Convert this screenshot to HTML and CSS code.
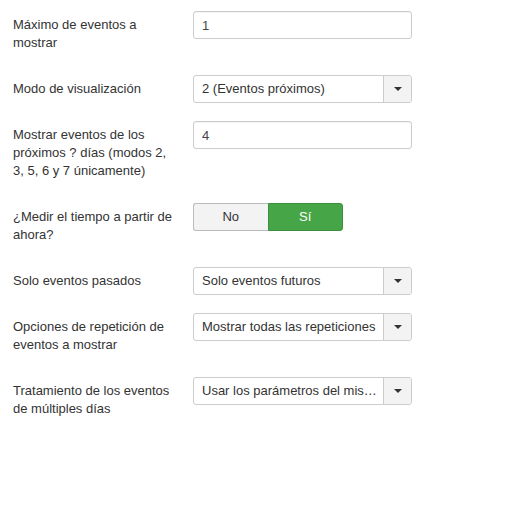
FILE: index.html
```html
<!DOCTYPE html>
<html lang="es">
<head>
    <meta charset="UTF-8">
    <meta name="viewport" content="width=device-width, initial-scale=1.0">
    <title>Opciones del módulo</title>
    <link rel="stylesheet" href="styles.css">
</head>
<body>
    <form class="options">
        <div class="control-group">
            <label class="control-label">Máximo de eventos a mostrar</label>
            <div class="controls">
                <input class="text-input" type="text" value="1">
            </div>
        </div>

        <div class="control-group">
            <label class="control-label">Modo de visualización</label>
            <div class="controls">
                <div class="chosen">
                    <span class="chosen-text">2 (Eventos próximos)</span>
                    <span class="chosen-btn"><b class="caret"></b></span>
                </div>
            </div>
        </div>

        <div class="control-group">
            <label class="control-label">Mostrar eventos de los próximos ? días (modos 2, 3, 5, 6 y 7 únicamente)</label>
            <div class="controls">
                <input class="text-input" type="text" value="4">
            </div>
        </div>

        <div class="control-group">
            <label class="control-label">¿Medir el tiempo a partir de ahora?</label>
            <div class="controls">
                <div class="btn-group">
                    <span class="btn">No</span>
                    <span class="btn btn-success">Sí</span>
                </div>
            </div>
        </div>

        <div class="control-group">
            <label class="control-label">Solo eventos pasados</label>
            <div class="controls">
                <div class="chosen">
                    <span class="chosen-text">Solo eventos futuros</span>
                    <span class="chosen-btn"><b class="caret"></b></span>
                </div>
            </div>
        </div>

        <div class="control-group">
            <label class="control-label">Opciones de repetición de eventos a mostrar</label>
            <div class="controls">
                <div class="chosen">
                    <span class="chosen-text">Mostrar todas las repeticiones</span>
                    <span class="chosen-btn"><b class="caret"></b></span>
                </div>
            </div>
        </div>

        <div class="control-group">
            <label class="control-label">Tratamiento de los eventos de múltiples días</label>
            <div class="controls">
                <div class="chosen">
                    <span class="chosen-text">Usar los parámetros del mis…</span>
                    <span class="chosen-btn"><b class="caret"></b></span>
                </div>
            </div>
        </div>
    </form>
</body>
</html>
```

FILE: styles.css
```css
/* Module options form */
body {
    font-family: "Liberation Sans", Arial, sans-serif;
    font-size: 13px;
    line-height: 18px;
    color: #333;
    background-color: #fff;
    margin: 0;
}

.options {
    padding: 11px 13px 0 13px;
}

.control-group {
    display: flex;
    align-items: flex-start;
    margin-bottom: 18px;
}

.control-label {
    width: 160px;
    padding: 5px 0;
    margin-right: 20px;
}

.controls {
    width: 219px;
}

.text-input {
    box-sizing: border-box;
    width: 100%;
    height: 28px;
    margin: 0;
    padding: 4px 8px;
    font-family: inherit;
    font-size: 13px;
    color: #444;
    border: 1px solid #ccc;
    border-radius: 3px;
    box-shadow: inset 0 1px 1px rgba(0, 0, 0, 0.05);
}

.chosen {
    box-sizing: border-box;
    display: flex;
    height: 28px;
    border: 1px solid #ccc;
    border-radius: 3px;
    background-color: #fff;
    overflow: hidden;
}

.chosen-text {
    flex: 1;
    min-width: 0;
    padding: 4px 0 4px 8px;
    white-space: nowrap;
    overflow: hidden;
}

.chosen-btn {
    width: 27px;
    border-left: 1px solid #ccc;
    background-color: #f3f3f3;
    display: flex;
    align-items: center;
    justify-content: center;
}

.caret {
    width: 0;
    height: 0;
    border-top: 4px solid #333;
    border-left: 4px solid transparent;
    border-right: 4px solid transparent;
}

.btn-group {
    display: flex;
    width: 150px;
}

.btn {
    box-sizing: border-box;
    flex: 1;
    height: 28px;
    line-height: 26px;
    text-align: center;
    border: 1px solid #bbb;
    background-color: #f3f3f3;
    color: #333;
}

.btn:first-child {
    border-radius: 3px 0 0 3px;
    border-right: none;
}

.btn-success {
    background-color: #46a546;
    border-color: #3c8f3c;
    color: #fff;
    border-radius: 0 3px 3px 0;
}
```
